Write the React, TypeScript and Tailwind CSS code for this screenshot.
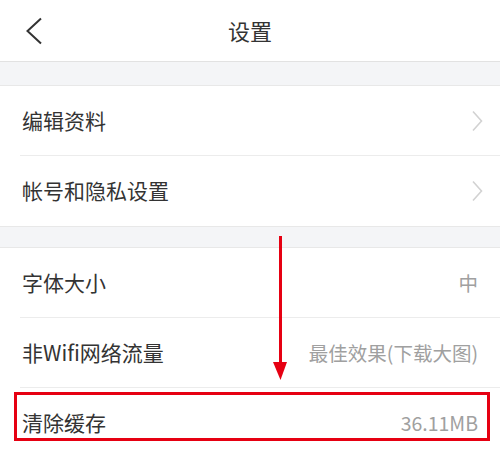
const font = { fontFamily: '"Noto Sans CJK SC", "Noto Sans", sans-serif' };

type Row = { label: string; value?: string; arrow?: boolean };

function Chevron() {
  return (
    <svg className="ml-auto mr-[-5px]" width="12" height="22" viewBox="0 0 12 22" fill="none">
      <polyline points="2,1.5 10.5,11 2,20.5" stroke="#d2d2d2" strokeWidth="1.6" />
    </svg>
  );
}

function SettingRow({ row, last }: { row: Row; last?: boolean }) {
  return (
    <div className="relative flex h-[70px] items-center pl-[22px] pr-[22px]">
      <span className="text-[21px] text-[#333]">{row.label}</span>
      {row.value && <span className="ml-auto text-[19.5px] text-[#a0a0a0]">{row.value}</span>}
      {row.arrow && <Chevron />}
      {!last && <div className="absolute bottom-0 left-[20px] right-0 h-px bg-[#ececec]" />}
    </div>
  );
}

export default function App() {
  return (
    <div className="relative h-[451px] w-[500px] overflow-hidden bg-white" style={font}>
      <div className="relative flex h-[62px] items-center justify-center border-b border-[#e2e2e2]">
        <svg className="absolute left-[25px] top-[17px]" width="18" height="28" viewBox="0 0 18 28" fill="none">
          <polyline points="16,1.5 2.5,14 16,26.5" stroke="#333" strokeWidth="2" />
        </svg>
        <span className="text-[22px] text-[#333]">设置</span>
      </div>
      <div className="h-[24px] border-b border-[#e8e8e8] bg-[#f4f5f7]" />

      <SettingRow row={{ label: "编辑资料", arrow: true }} />
      <SettingRow row={{ label: "帐号和隐私设置", arrow: true }} last />

      <div className="h-[22px] border-y border-[#e8e8e8] bg-[#f4f5f7]" />

      <SettingRow row={{ label: "字体大小", value: "中" }} />
      <SettingRow row={{ label: "非Wifi网络流量", value: "最佳效果(下载大图)" }} />
      <SettingRow row={{ label: "清除缓存", value: "36.11MB" }} last />

      {/* annotation */}
      <div className="absolute left-[14px] top-[392px] h-[49px] w-[476px] border-[3px] border-[#e60012]" />
      <svg className="absolute left-[270px] top-[236px]" width="20" height="146" viewBox="0 0 20 146">
        <line x1="10.5" y1="0" x2="10.5" y2="128" stroke="#e60012" strokeWidth="3" />
        <polygon points="3,126 17,126 10.5,144" fill="#e60012" />
      </svg>
    </div>
  );
}
